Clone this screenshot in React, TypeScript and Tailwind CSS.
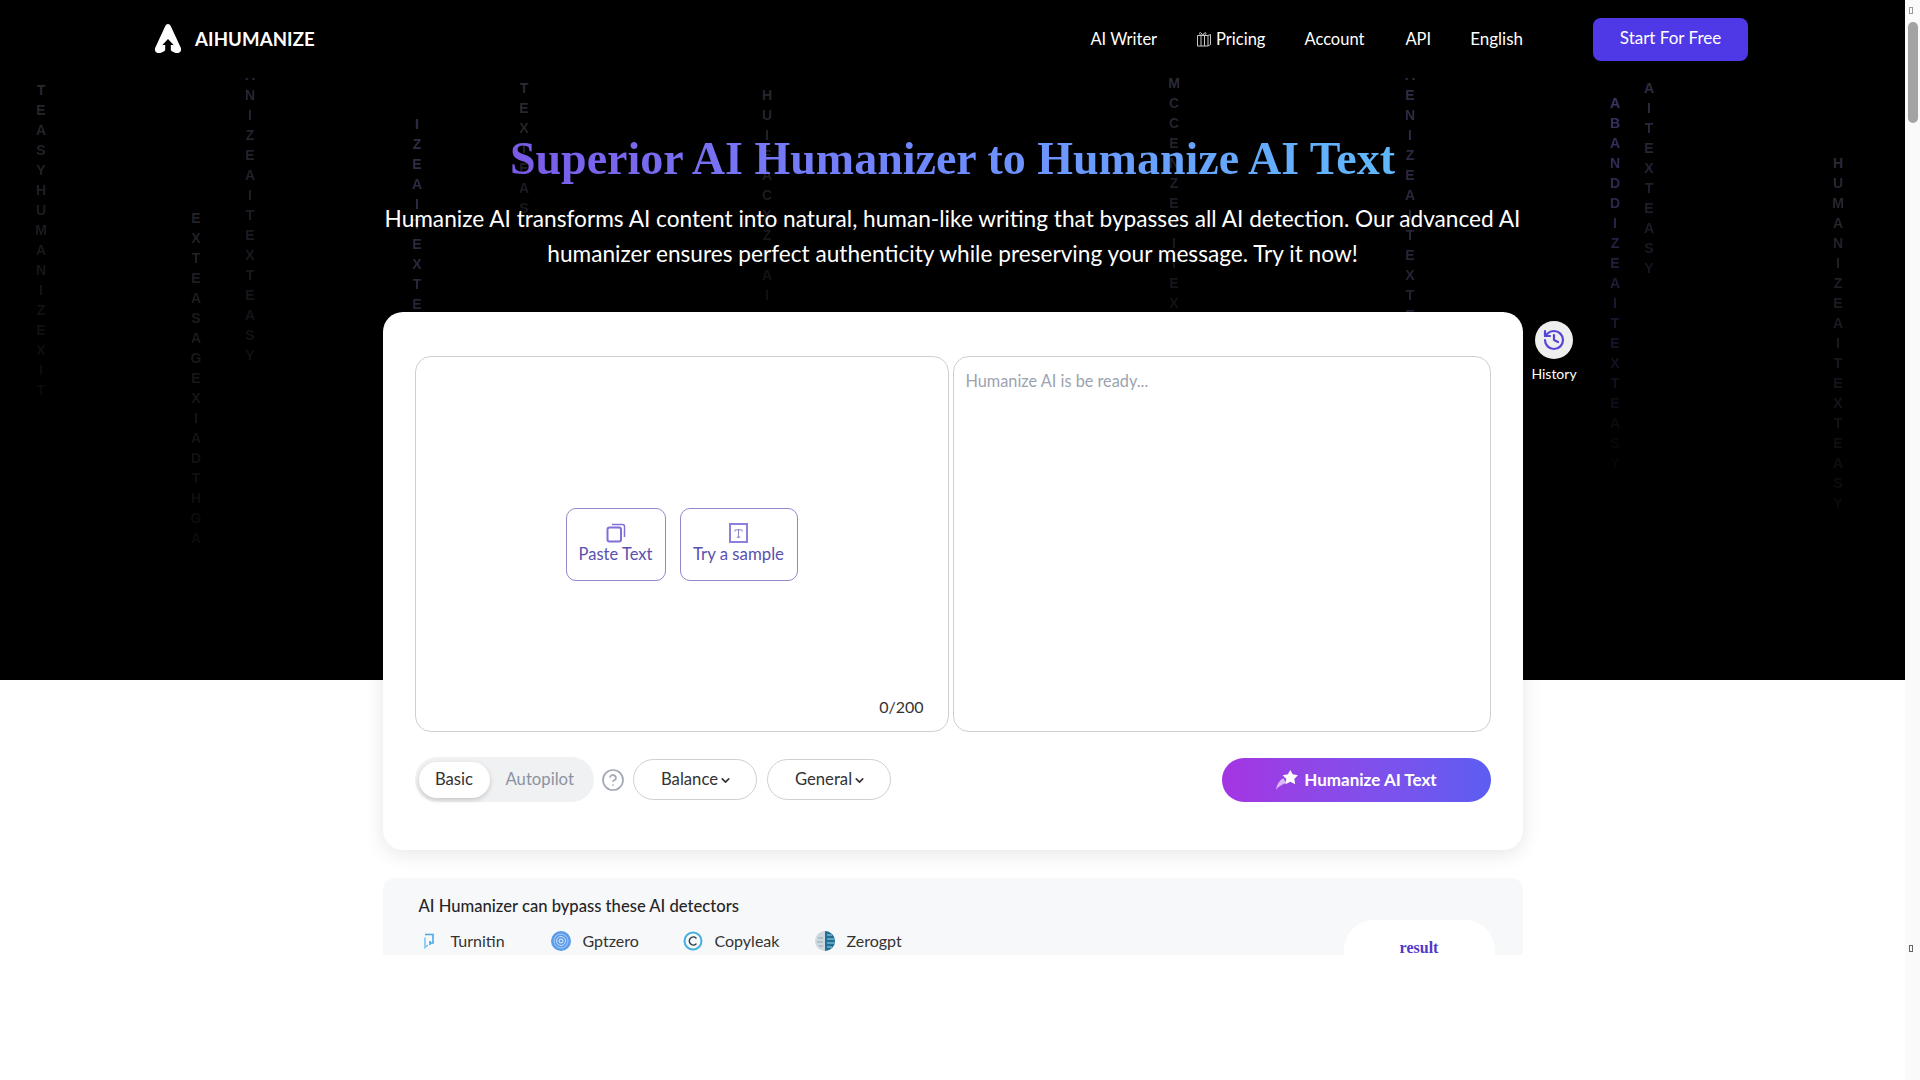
import { ChevronDown, CircleHelp, History, Type } from "lucide-react";

const font = "font-['Lato','Noto_Sans',sans-serif]";

const rainColumns = [
  { x: 41, y: 90, text: "TEASYHUMANIZEXIT", color: "#28282f", fade: 0.8 },
  { x: 196, y: 218, text: "EXTEASAGEXIADTHGA", color: "#222228", fade: 0.7 },
  { x: 250, y: 75, text: "ANIZEAITEXTEASY", color: "#2a2836", fade: 0.65 },
  { x: 417, y: 124, text: "IZEAITEXTE", color: "#302e46", fade: 0.2 },
  { x: 524, y: 88, text: "TEXTEAS", color: "#2a2a33", fade: 0.5 },
  { x: 767, y: 95, text: "HUIEACXZEAI", color: "#26262e", fade: 0.6 },
  { x: 1174, y: 83, text: "MCCENZEAITEX", color: "#2a2936", fade: 0.6 },
  { x: 1410, y: 75, text: "AENIZEAITEXTE", color: "#302e46", fade: 0.3 },
  { x: 1615, y: 103, text: "ABANDDIZEAITEXTEASY", color: "#383464", fade: 0.95 },
  { x: 1649, y: 88, text: "AITEXTEASY", color: "#2e2c40", fade: 0.55 },
  { x: 1838, y: 163, text: "HUMANIZEAITEXTEASY", color: "#2a2936", fade: 0.8 },
];

function LetterRain() {
  return (
    <div className="absolute inset-0 overflow-hidden">
      {rainColumns.map((col) => (
        <div
          key={col.x}
          className="absolute flex -translate-x-1/2 flex-col items-center font-['Liberation_Sans',sans-serif] text-[14px] font-bold leading-[20px]"
          style={{ left: col.x, top: col.y - 10, color: col.color }}
        >
          {col.text.split("").map((ch, i) => (
            <span key={i} style={{ opacity: 1 - (col.fade * i) / col.text.length }}>
              {ch}
            </span>
          ))}
        </div>
      ))}
    </div>
  );
}

function Logo() {
  return (
    <svg width="30" height="30" viewBox="0 0 30 32" fill="none">
      <path
        fill="#fff"
        d="M15 0c1.2 0 2.2.8 2.9 2.1l10.6 23c1.3 2.9-.2 5.900-3.400 5.900-2.600 0-5.200-1.200-7.100-3.100v-5.400h3l-6-6.500-6 6.500h3v5.400C10.100 29.800 7.500 31 4.900 31 1.700 31 .200 28 1.500 25.100l10.600-23C12.800.8 13.800 0 15 0Z"
      />
    </svg>
  );
}

function GiftIcon() {
  return (
    <svg width="16" height="16" viewBox="0 0 16 16" fill="none" stroke="#c8c8c8" strokeWidth="1">
      <path d="M1.500 4.500h10.500v10.500H1.500z" />
      <path d="M12 4.500l2.500-1v10l-2.500 1.500" />
      <path d="M5 4.500V15M8.500 4.500V15" />
      <path d="M6.800 4.500C5 1 3.500 1 3.500 2.500s2 2 3.300 2Zm0 0c1.700-3.500 3.200-3.500 3.200-2s-2 2-3.200 2Z" />
    </svg>
  );
}

function PasteIcon() {
  return (
    <svg width="20" height="20" viewBox="0 0 20 20" fill="none" stroke="#7f6fd6">
      <rect x="1.500" y="4.500" width="13.500" height="14" rx="2" strokeWidth="2" />
      <path d="M6 1.500h10.500a2 2 0 0 1 2 2V14" strokeWidth="1.500" />
    </svg>
  );
}

function StarIcon() {
  return (
    <svg width="24" height="22" viewBox="0 0 22 20">
      <path fill="#d9b8f5" d="M1 19c.5-4 2.500-8 6.500-10.500l3 4C7 14 3.500 15.500 1 19Z" />
      <path
        fill="#fff"
        d="M14 .8l2.200 4 4.800.8-3.300 3.400.8 4.800-4.500-2.200-4.400 2.200.8-4.800L7 5.600l4.800-.8L14 .8Z"
      />
    </svg>
  );
}

function TurnitinIcon() {
  return (
    <svg width="12" height="16" viewBox="0 0 12 16" fill="none" stroke="#4aa7e8" strokeWidth="1.600" className="ml-[4px]">
      <path d="M2 1.500h8v8.500H7" />
      <path d="M2 4.500v10l3-2.500" stroke="#7cc4f2" />
      <path d="M7 8v4" />
    </svg>
  );
}

function GptzeroIcon() {
  return (
    <svg width="20" height="20" viewBox="0 0 20 20" fill="none">
      <circle cx="10" cy="10" r="10" fill="#5b9bea" />
      <circle cx="10" cy="10" r="7" stroke="#a9cdf5" />
      <circle cx="10" cy="10" r="4.500" stroke="#cfe3fa" />
      <circle cx="10" cy="10" r="2" stroke="#e8f2fd" />
    </svg>
  );
}

function CopyleakIcon() {
  return (
    <svg width="20" height="20" viewBox="0 0 20 20" fill="none">
      <circle cx="10" cy="10" r="8.500" stroke="#45b0de" strokeWidth="2" />
      <path d="M13 7a4 4 0 1 0 0 6" stroke="#2b3a44" strokeWidth="1.500" strokeLinecap="round" />
    </svg>
  );
}

function ZerogptIcon() {
  return (
    <svg width="20" height="20" viewBox="0 0 20 20">
      <circle cx="10" cy="10" r="10" fill="#cfd8de" />
      <path d="M10 0a10 10 0 0 1 0 20Z" fill="#1f6f96" />
      <path d="M12 4h5M12 8h7M12 12h7M12 16h5" stroke="#a8d3e6" strokeWidth="1" />
      <path d="M3 7h5M2 11h6M4 15h4" stroke="#8fa5b2" strokeWidth="1" />
    </svg>
  );
}

const detectors = [
  { name: "Turnitin", icon: <TurnitinIcon />, width: "w-[132px]" },
  { name: "Gptzero", icon: <GptzeroIcon />, width: "w-[132px]" },
  { name: "Copyleak", icon: <CopyleakIcon />, width: "w-[132px]" },
  { name: "Zerogpt", icon: <ZerogptIcon />, width: "w-[130px]" },
];

function SelectPill({ label }: { label: string }) {
  return (
    <button className="flex h-[41px] w-[124px] items-center justify-center rounded-full border border-[#d0d0d0] bg-white pl-[4px] text-[16.7px] text-[#333]">
      {label}
      <ChevronDown size={13} strokeWidth={3} className="ml-[1px] mt-[2px]" />
    </button>
  );
}

function Nav() {
  return (
    <header className="relative z-10 flex h-[78px] items-center justify-between bg-black pl-[153px] pr-[157px]">
      <div className="flex items-center gap-[12px]">
        <Logo />
        <span className="mt-[2px] text-[18.6px] font-bold tracking-[0.1px] text-white">AIHUMANIZE</span>
      </div>
      <nav className="flex items-center text-[16.5px] text-white">
        <a className="mr-[39px]">AI Writer</a>
        <a className="mr-[39px] flex items-center gap-[4px]">
          <GiftIcon />
          Pricing
        </a>
        <a className="mr-[41px]">Account</a>
        <a className="mr-[39px]">API</a>
        <a className="mr-[70px] text-[17px]">English</a>
        <button className="h-[43px] w-[155px] rounded-[8px] bg-[#4f39e6] pb-[2px] text-[17px] text-white">
          Start For Free
        </button>
      </nav>
    </header>
  );
}

function Editor() {
  return (
    <div className="relative z-10 mx-auto h-[538px] w-[1140px] rounded-[20px] bg-white px-[32px] pt-[44px] shadow-[0_4px_20px_rgba(0,0,0,0.1)]">
      <div className="flex h-[376px] gap-[4px]">
        <div className="relative flex w-[534px] items-center justify-center gap-[14px] rounded-[16px] border border-[#cfcfcf]">
          <button className="flex h-[73px] w-[100px] flex-col items-center justify-center rounded-[10px] border border-[#8f89cc] text-[16.5px] leading-[22px] text-[#5a50b0]">
            <PasteIcon />
            Paste Text
          </button>
          <button className="flex h-[73px] w-[118px] flex-col items-center justify-center rounded-[10px] border border-[#8f89cc] text-[16.8px] leading-[22px] text-[#5a50b0]">
            <span className="flex h-[20px] w-[19px] items-center justify-center border-2 border-[#8f7fdc]">
              <Type size={11} strokeWidth={1.5} />
            </span>
            Try a sample
          </button>
          <span className="absolute bottom-[12px] right-[24px] text-[16px] text-[#333]">0/200</span>
        </div>
        <div className="w-[538px] rounded-[16px] border border-[#cfcfcf] px-[12px] py-[12px] text-[16.3px] text-[#9ca3af]">
          Humanize AI is be ready...
        </div>
      </div>
      <div className="mt-[25px] flex items-center">
        <div className="flex h-[45px] w-[179px] items-center rounded-full bg-[#f0f1f3] pl-[4px] text-[16.7px]">
          <span className="flex h-[36px] w-[71px] items-center justify-center rounded-full bg-white text-[#333] shadow-[0_2px_5px_rgba(0,0,0,0.18)]">
            Basic
          </span>
          <span className="ml-[16px] text-[#8b93a1]">Autopilot</span>
        </div>
        <CircleHelp size={24} strokeWidth={1.7} className="ml-[7px] text-[#a0a8b5]" />
        <div className="ml-[8px] flex gap-[10px]">
          <SelectPill label="Balance" />
          <SelectPill label="General" />
        </div>
        <button className="ml-auto flex h-[44px] w-[269px] items-center justify-center gap-[5px] rounded-full bg-gradient-to-r from-[#a434e2] to-[#5c5df2] text-[17px] font-bold text-white">
          <StarIcon />
          Humanize AI Text
        </button>
      </div>
    </div>
  );
}

function Detectors() {
  return (
    <div className="relative mx-auto mt-[28px] h-[77px] w-[1140px] rounded-t-[12px] bg-[#f7f8fa] pl-[36px] pt-[17px]">
      <p className="text-[16.6px] font-medium leading-[22px] text-[#262626]">
        AI Humanizer can bypass these AI detectors
      </p>
      <div className="mt-[13px] flex items-center text-[16px] leading-[22px] text-[#333]">
        {detectors.map((d) => (
          <div key={d.name} className={`flex items-center ${d.width}`}>
            <span className="flex w-[32px] justify-start">{d.icon}</span>
            {d.name}
          </div>
        ))}
      </div>
      <div className="absolute right-[28px] top-[42px] flex h-[60px] w-[151px] justify-center rounded-t-[30px] bg-white pt-[19px] font-['Liberation_Serif',serif] text-[16px] font-bold leading-[18px] text-[#4f39c8]">
        result
      </div>
    </div>
  );
}

function Scrollbar() {
  return (
    <aside className="relative h-[1080px] w-[15px] bg-[#fafafa]">
      <span className="absolute left-[4px] top-[7px] h-[7px] w-[4px] border border-[#999]" />
      <div className="absolute left-[3px] top-[22px] h-[101px] w-[10px] rounded-full bg-[#a3a3a3]" />
      <span className="absolute left-[4px] top-[945px] h-[7px] w-[4px] border border-[#666]" />
    </aside>
  );
}

export default function App() {
  return (
    <div className={`flex h-[1080px] w-[1920px] overflow-hidden bg-white ${font}`}>
      <main className="h-[955px] w-[1905px] overflow-hidden">
        <section className="relative h-[680px] bg-black">
          <LetterRain />
          <Nav />
          <div className="relative text-center">
            <h1 className="mt-[53px] inline-block bg-gradient-to-r from-[#7a5ae8] via-[#6e8bff] to-[#5fb8fb] bg-clip-text font-['Liberation_Serif',serif] text-[46px] font-bold leading-[56px] text-transparent">
              Superior AI Humanizer to Humanize AI Text
            </h1>
            <p className="mx-auto mt-[14px] w-[1160px] text-[22.65px] leading-[35px] text-white">
              Humanize AI transforms AI content into natural, human-like writing that bypasses all AI detection. Our advanced AI humanizer ensures perfect authenticity while preserving your message. Try it now!
            </p>
          </div>
          <div className="relative mt-[41px]">
            <Editor />
            <div className="absolute left-[1530px] top-[9px] z-10 flex w-[48px] flex-col items-center">
              <span className="flex h-[38px] w-[38px] items-center justify-center rounded-full bg-[#eeeeee]">
                <History size={24} strokeWidth={2.2} className="text-[#5546d8]" />
              </span>
              <span className="mt-[5px] text-[14px] leading-[20px] text-white">History</span>
            </div>
          </div>
        </section>
        <div className="pt-[170px]">
          <Detectors />
        </div>
      </main>
      <Scrollbar />
    </div>
  );
}
